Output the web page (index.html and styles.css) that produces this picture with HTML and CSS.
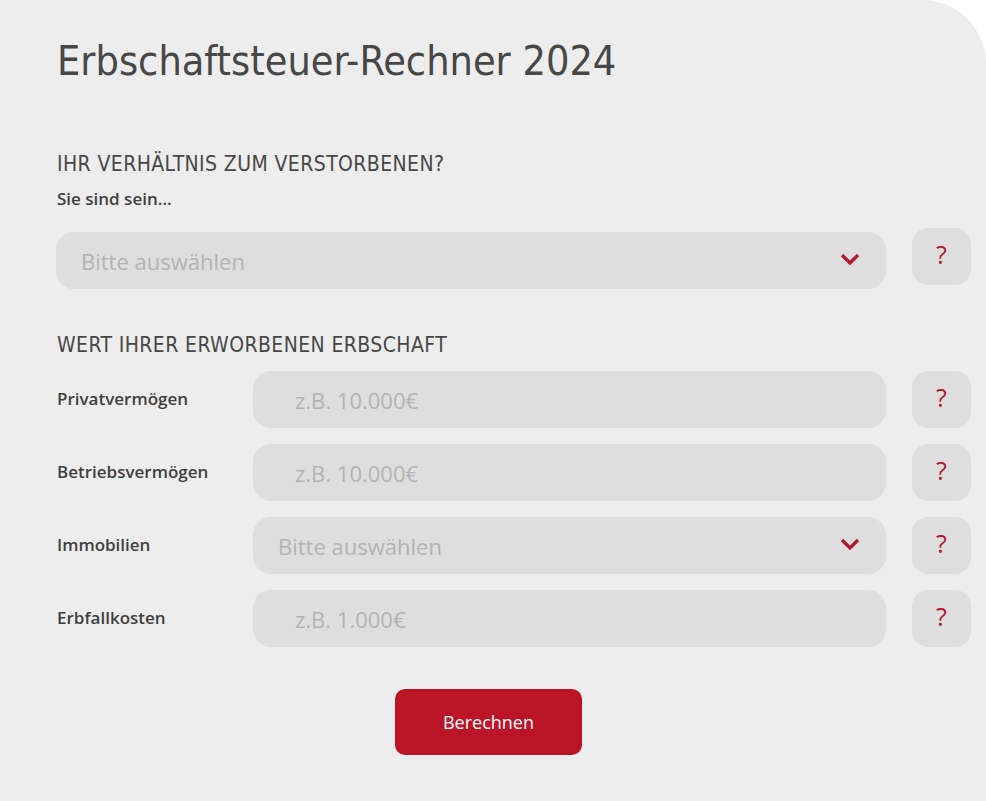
FILE: index.html
```
<!DOCTYPE html>
<html lang="de">
<head>
<meta charset="utf-8">
<title>Erbschaftsteuer-Rechner 2024</title>
<link rel="stylesheet" href="styles.css">
</head>
<body>
<main class="panel">
  <h1 class="title">Erbschaftsteuer-Rechner 2024</h1>

  <section class="section">
    <h2 class="section-title">IHR VERHÄLTNIS ZUM VERSTORBENEN?</h2>
    <p class="sub">Sie sind sein...</p>
    <div class="grid">
      <div class="field select wide">
        <span class="ph">Bitte auswählen</span>
        <svg class="chev" width="20" height="12" viewBox="0 0 20 12"><polyline points="2,2 10,10 18,2" fill="none" stroke="#b8132a" stroke-width="3.2"/></svg>
      </div>
      <button class="help first">?</button>
    </div>
  </section>

  <section class="section two">
    <h2 class="section-title">WERT IHRER ERWORBENEN ERBSCHAFT</h2>
    <div class="grid rows">
      <label class="label">Privatvermögen</label>
      <div class="field input"><span class="ph">z.B. 10.000€</span></div>
      <button class="help">?</button>

      <label class="label">Betriebsvermögen</label>
      <div class="field input"><span class="ph">z.B. 10.000€</span></div>
      <button class="help">?</button>

      <label class="label">Immobilien</label>
      <div class="field select">
        <span class="ph">Bitte auswählen</span>
        <svg class="chev" width="20" height="12" viewBox="0 0 20 12"><polyline points="2,2 10,10 18,2" fill="none" stroke="#b8132a" stroke-width="3.2"/></svg>
      </div>
      <button class="help">?</button>

      <label class="label">Erbfallkosten</label>
      <div class="field input"><span class="ph">z.B. 1.000€</span></div>
      <button class="help">?</button>
    </div>
  </section>

  <div class="actions">
    <button class="submit">Berechnen</button>
  </div>
</main>
</body>
</html>
```
FILE: styles.css
```
html, body {
  margin: 0;
  padding: 0;
  background: #ffffff;
}

.panel {
  box-sizing: border-box;
  width: 986px;
  height: 801px;
  background: #ededed;
  border-top-right-radius: 64px;
  padding: 36px 15px 0 57px;
  font-family: "Open Sans", sans-serif;
  color: #464646;
}

.title {
  margin: 0;
  font-family: "DejaVu Sans", sans-serif;
  font-stretch: condensed;
  font-weight: normal;
  font-size: 41px;
  line-height: 50px;
  color: #474747;
}

.section {
  margin-top: 66px;
}

.section.two {
  margin-top: 44px;
}

.section-title {
  margin: 0;
  font-family: "DejaVu Sans", sans-serif;
  font-stretch: condensed;
  font-weight: normal;
  font-size: 21px;
  letter-spacing: 0.4px;
  line-height: 24px;
  color: #474747;
}

.sub {
  margin: 12px 0 0;
  font-weight: 600;
  font-size: 17px;
  line-height: 22px;
  color: #3f3f3f;
}

.grid {
  display: grid;
  grid-template-columns: 196px 633px 59px;
  column-gap: 0;
  margin-top: 22px;
}

.grid.rows {
  margin-top: 14px;
  row-gap: 16px;
  align-items: center;
}

.field {
  box-sizing: border-box;
  height: 57px;
  background: #dedede;
  border-radius: 18px;
  display: flex;
  align-items: center;
  justify-content: space-between;
  font-size: 22px;
}

.field.wide {
  grid-column: 1 / 3;
  margin-left: -1px;
  padding: 0 26px 0 26px;
}

.field.input {
  padding-left: 42px;
}

.field.select {
  padding: 0 26px 0 25px;
}

.ph {
  color: #b3b3b3;
}

.chev {
  display: block;
  margin-top: -4px;
}

.help {
  grid-column: 3;
  margin-left: 26px;
  width: 59px;
  height: 57px;
  border: 0;
  border-radius: 16px;
  background: #dedede;
  color: #b8132a;
  font-family: "Open Sans", sans-serif;
  font-weight: 500;
  font-size: 25px;
  padding: 0 0 6px;
  cursor: pointer;
}

.help.first {
  margin-top: -4px;
}

.label {
  font-weight: 600;
  font-size: 17px;
  color: #3f3f3f;
  padding-bottom: 2px;
}

.actions {
  margin-top: 42px;
  padding-left: 338px;
}

.submit {
  width: 187px;
  height: 66px;
  border: 0;
  border-radius: 10px;
  background: #bc1427;
  color: #ffffff;
  font-family: "Open Sans", sans-serif;
  font-size: 18px;
  cursor: pointer;
}
```
